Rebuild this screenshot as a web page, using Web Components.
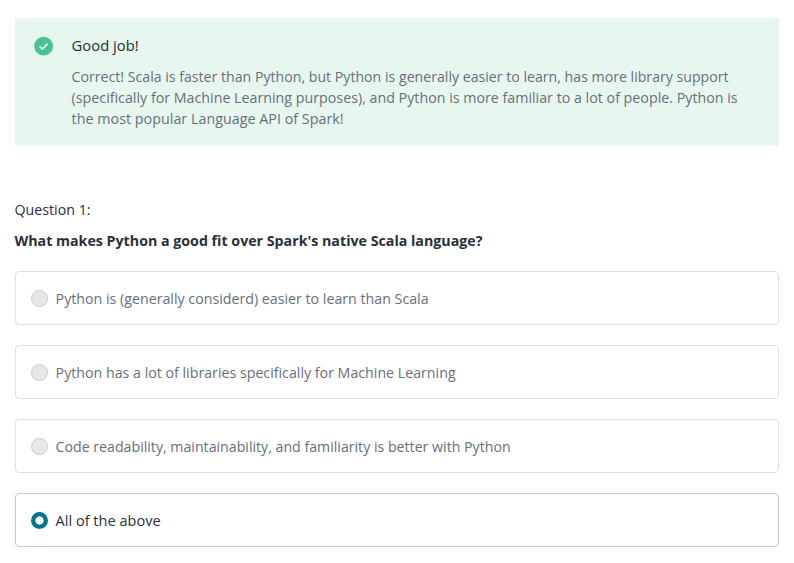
<!DOCTYPE html>
<html lang="en"><head><meta charset="utf-8"><title>Quiz</title>
<style>body{margin:0;background:#fff;font-family:"Open Sans","Noto Sans",sans-serif}</style></head>
<body><quiz-page></quiz-page>
<script>
function shadow(el, html){el.attachShadow({mode:"open"}).innerHTML=html;}
// A single line of text, condensed to a given width.
customElements.define("text-line", class extends HTMLElement{
  connectedCallback(){
    shadow(this, `<style>:host{display:block;white-space:nowrap}span{display:inline-block;vertical-align:top;transform-origin:0 50%}</style><span><slot></slot></span>`);
    const s=this.shadowRoot.querySelector("span"), target=+this.getAttribute("width");
    s.style.transform=`translateX(var(--nudge,0px)) scaleX(${target/s.getBoundingClientRect().width})`;
  }
});
customElements.define("feedback-banner", class extends HTMLElement{
  connectedCallback(){
    shadow(this, `<style>
:host{--nudge:.6px;display:flex;box-sizing:border-box;height:128px;padding:17px 19px;gap:17px;background:#e7f7ef;color:#686f7a}
svg{flex:none;width:20px;height:20px;margin-top:1px}
::slotted([slot=title]){color:#14342b;margin-bottom:10px}
</style>
<svg viewBox="0 0 20 20"><circle cx="9.6" cy="10.2" r="9.4" fill="#48c28f"/><path d="M5.6 10.3l2.8 2.7 5-5.1" fill="none" stroke="#fff" stroke-width="1.6"/></svg>
<div><slot name="title"></slot><slot></slot></div>`);
  }
});
customElements.define("answer-option", class extends HTMLElement{
  connectedCallback(){
    shadow(this, `<style>
:host{--nudge:.6px;display:flex;align-items:center;box-sizing:border-box;height:54px;padding:0 15px;gap:6.6px;border:1px solid #dedfe0;border-radius:4px;color:#686f7a}
:host([checked]){border-color:#c4c6c8;color:#29303b}
i{box-sizing:border-box;width:17.4px;height:17.4px;margin-top:.6px;border-radius:50%;background:#e6e7e9;border:1px solid #cacbcc}
:host([checked]) i{border:0;background:radial-gradient(circle,#fff 3.7px,#007791 4.5px)}
</style><i></i><slot></slot>`);
  }
});
customElements.define("quiz-page", class extends HTMLElement{
  connectedCallback(){
    shadow(this, `<style>
:host{display:block;padding:18px 15px 0;font-size:15px;line-height:21px;color:#29303b}
.q{margin-top:53px}.q,.h{--nudge:-.5px}.h{margin-top:10px;font-weight:700}
.answers{display:grid;gap:20px;margin-top:20px}
</style>
<feedback-banner><text-line slot="title" width="67">Good job!</text-line>
<text-line width="657">Correct! Scala is faster than Python, but Python is generally easier to learn, has more library support</text-line>
<text-line width="666">(specifically for Machine Learning purposes), and Python is more familiar to a lot of people. Python is</text-line>
<text-line width="272">the most popular Language API of Spark!</text-line></feedback-banner>
<text-line class="q" width="76">Question 1:</text-line>
<text-line class="h" width="468">What makes Python a good fit over Spark's native Scala language?</text-line>
<div class="answers">
<answer-option><text-line width="373">Python is (generally considerd) easier to learn than Scala</text-line></answer-option>
<answer-option><text-line width="400">Python has a lot of libraries specifically for Machine Learning</text-line></answer-option>
<answer-option><text-line width="455">Code readability, maintainability, and familiarity is better with Python</text-line></answer-option>
<answer-option checked><text-line width="105">All of the above</text-line></answer-option>
</div>`);
  }
});
</script></body></html>
